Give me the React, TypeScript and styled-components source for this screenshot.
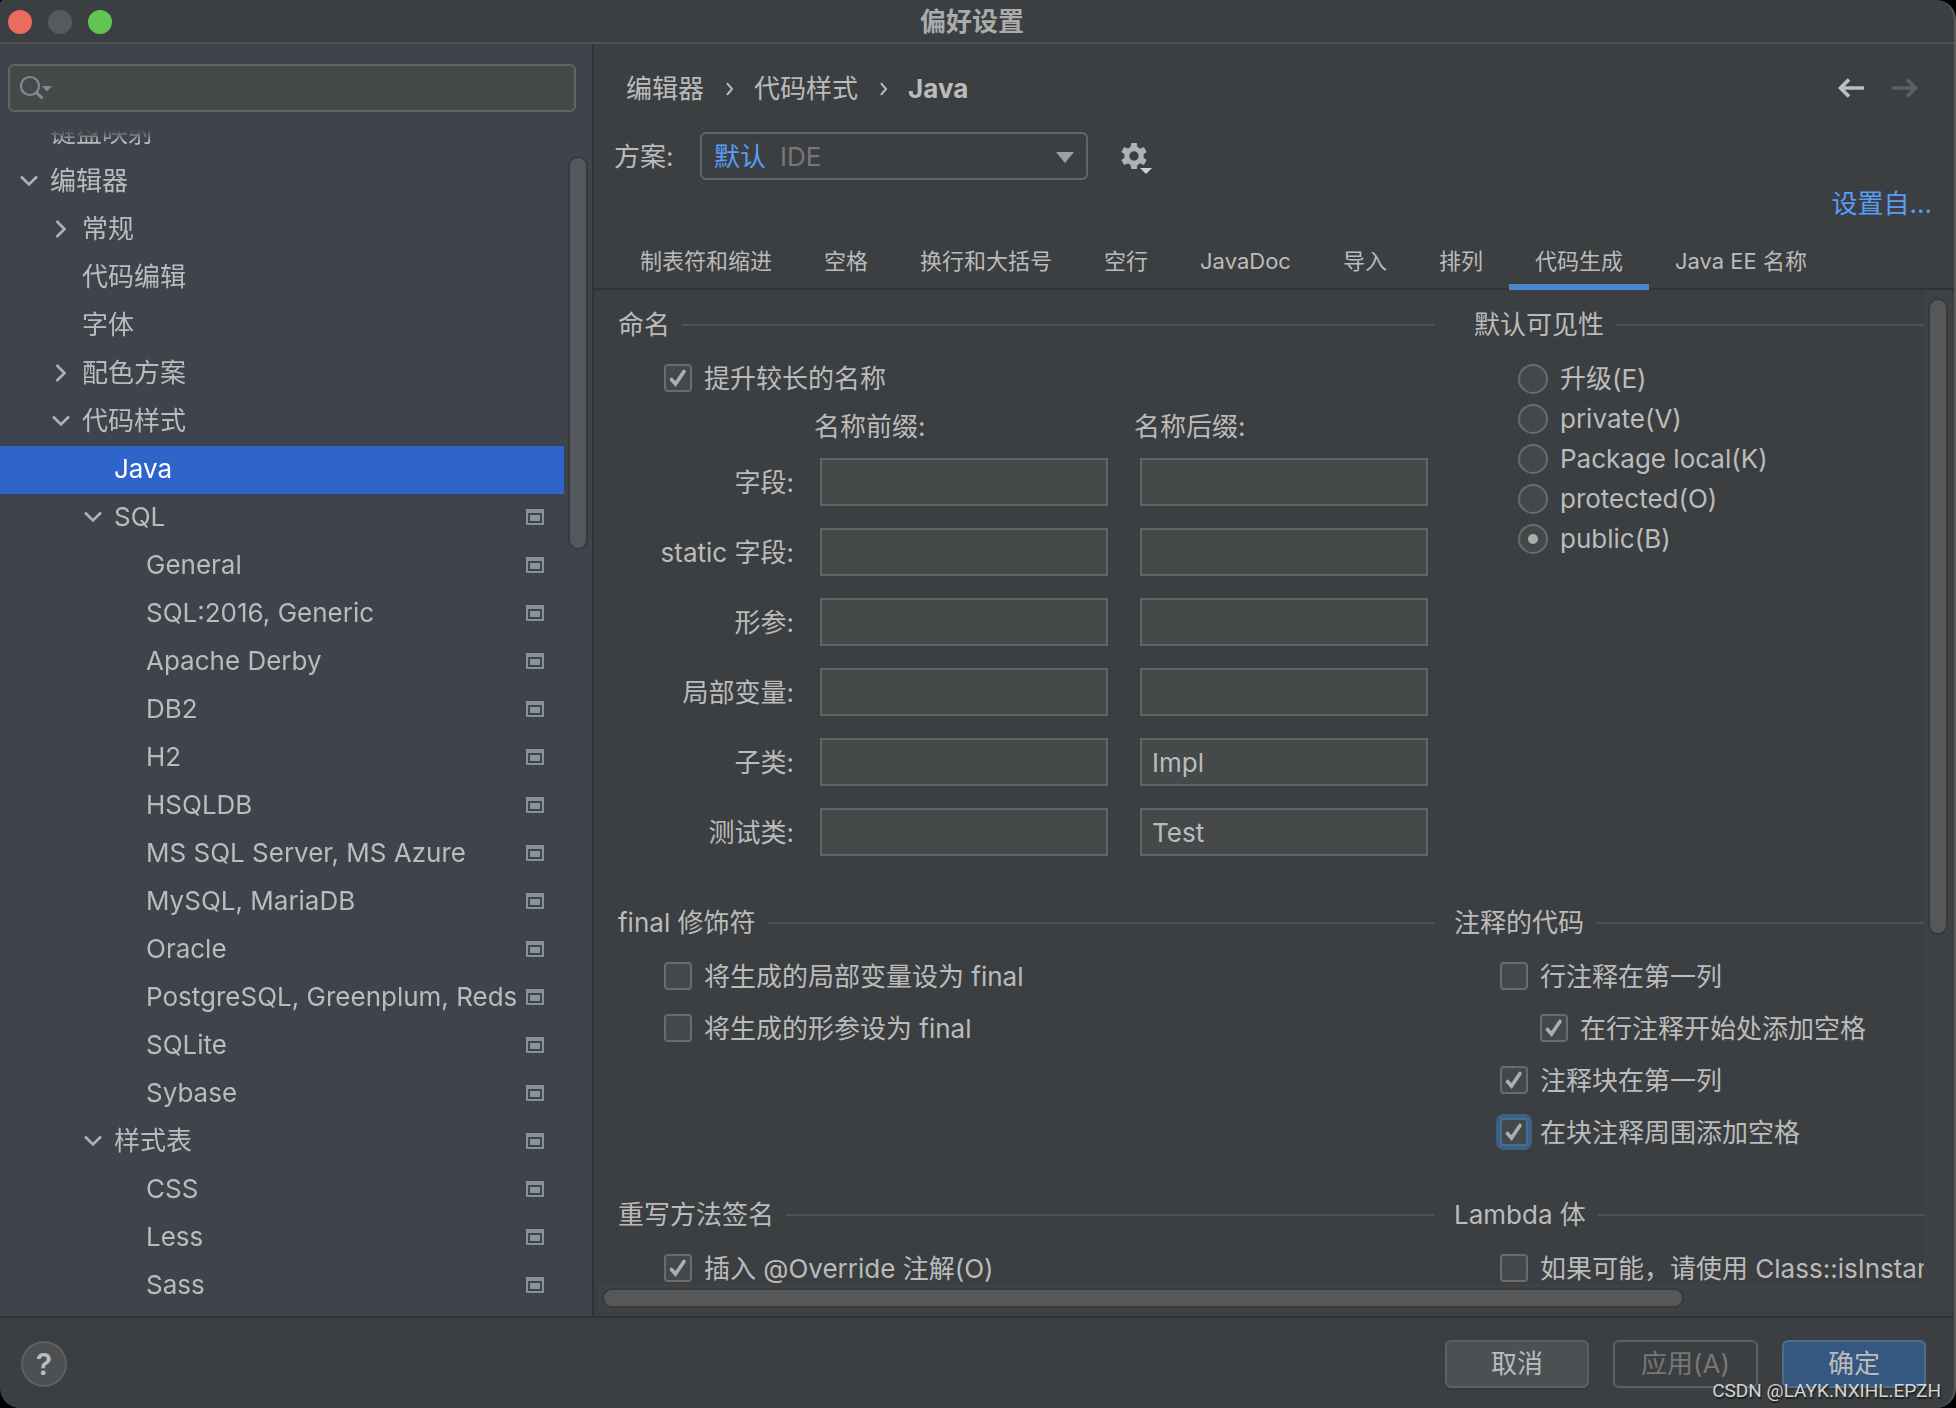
import React from "react";
import styled, { createGlobalStyle, css } from "styled-components";

const color = {
  panel: "#3c3f41",
  sidebar: "#3f434c",
  field: "#45494a",
  border: "#646464",
  divider: "#323232",
  rule: "#515151",
  text: "#bbbbbb",
  dim: "#777777",
  link: "#589df6",
  accent: "#4a88c7",
  selected: "#2f65ca",
  badge: "#87939a",
  thumb: "#565759",
  track: "#3f4244",
};

const Global = createGlobalStyle`
  *, *::before, *::after { box-sizing: border-box; }
  body { margin: 0; background: #000; }
  body, button, input, select {
    font-family: Inter, "Noto Sans CJK SC", sans-serif;
    font-size: 26px;
    line-height: 32px;
    color: ${color.text};
  }
  button, input, select { margin: 0; padding: 0; }
  ul { list-style: none; margin: 0; padding: 0; }
`;

const Window = styled.div`
  position: relative;
  display: flex;
  flex-direction: column;
  height: 100vh;
  overflow: hidden;
  background: ${color.panel};
  border-right: 2px solid #5a5c5e;
  border-radius: 4px 20px 20px 20px;
`;

/* ---------- title bar ---------- */

const TitleBar = styled.header`
  flex: none;
  display: flex;
  align-items: center;
  height: 44px;
  padding: 2px 18px 0 8px;
  border-bottom: 2px solid ${color.rule};
`;

const Lights = styled.div`
  flex: 1;
  display: flex;
  gap: 16px;
`;

const Light = styled.button<{ $fill: string }>`
  width: 24px;
  height: 24px;
  border: 0;
  border-radius: 50%;
  background: ${(p) => p.$fill};
`;

const Title = styled.h1`
  margin: 0;
  font-size: 26px;
  line-height: 32px;
  font-weight: 700;
  color: #a9abac;
`;

const TitleSpacer = styled.div`
  flex: 1;
`;

/* ---------- sidebar ---------- */

const Body = styled.div`
  flex: 1;
  min-height: 0;
  display: flex;
`;

const Sidebar = styled.nav`
  flex: none;
  display: flex;
  flex-direction: column;
  width: 594px;
  background: ${color.sidebar};
  border-right: 2px solid ${color.divider};
`;

const SearchBox = styled.label`
  flex: none;
  display: flex;
  align-items: center;
  height: 48px;
  margin: 20px 16px 18px 8px;
  padding: 0 10px;
  background: ${color.field};
  border: 2px solid ${color.border};
  border-radius: 6px;
`;

const SearchInput = styled.input`
  flex: 1;
  min-width: 0;
  border: 0;
  outline: 0;
  background: transparent;
`;

const TreeArea = styled.div`
  flex: 1;
  min-height: 0;
  display: flex;
  overflow: hidden;
`;

const Tree = styled.ul`
  flex: 1;
  min-width: 0;
  overflow: hidden;
  mask-image: linear-gradient(transparent, #000 12px);
`;

const TreeRow = styled.li<{ $depth: number; $selected?: boolean }>`
  display: flex;
  align-items: center;
  height: 48px;
  padding: 0 20px 2px ${(p) => 18 + p.$depth * 32}px;
  white-space: nowrap;
  ${(p) =>
    p.$selected &&
    css`
      background: ${color.selected};
      color: #ffffff;
    `}
  &:first-child {
    margin-top: -20px;
  }
`;

const Twisty = styled.span`
  flex: none;
  display: flex;
  width: 32px;
`;

const RowText = styled.span`
  flex: 1;
  min-width: 0;
  overflow: hidden;
`;

const SideScroll = styled.div`
  flex: none;
  width: 28px;
  padding: 26px 4px 0;
`;

const Thumb = styled.div<{ $fill?: string }>`
  width: 20px;
  height: 100%;
  border: 2px solid #37393b;
  border-radius: 10px;
  background: ${(p) => p.$fill ?? color.thumb};
`;

const SideThumb = styled(Thumb)`
  height: 34%;
`;

/* ---------- main pane ---------- */

const Main = styled.main`
  flex: 1;
  min-width: 0;
  display: flex;
  flex-direction: column;
`;

const TopRow = styled.div`
  display: flex;
  justify-content: space-between;
  align-items: center;
  height: 88px;
  padding: 0 36px 0 32px;
`;

const Crumbs = styled.ol`
  display: flex;
  align-items: center;
  gap: 20px;
  margin: 0;
  padding: 2px 0 0;
  list-style: none;
`;

const Crumb = styled.li<{ $current?: boolean }>`
  display: flex;
  align-items: center;
  gap: 22px;
  font-weight: ${(p) => (p.$current ? 700 : 400)};
`;

const History = styled.div`
  display: flex;
  gap: 26px;
`;

const IconButton = styled.button`
  display: flex;
  border: 0;
  background: transparent;
`;

const SchemeRow = styled.div`
  display: flex;
  align-items: center;
  height: 48px;
  padding-left: 20px;
`;

const SchemeLabel = styled.label`
  width: 86px;
  padding-top: 2px;
`;

const SelectBox = styled.div`
  position: relative;
  width: 388px;
  margin-right: 32px;
`;

const SchemeSelect = styled.select`
  display: block;
  appearance: none;
  width: 100%;
  height: 48px;
  padding: 2px 12px 0;
  background: ${color.panel};
  border: 2px solid ${color.border};
  border-radius: 6px;
  color: ${color.link};
`;

const SelectHint = styled.span`
  position: absolute;
  top: 9px;
  left: 80px;
  color: ${color.dim};
  pointer-events: none;
`;

const SelectArrow = styled.svg`
  position: absolute;
  top: 20px;
  right: 14px;
  pointer-events: none;
`;

const LinkRow = styled.div`
  display: flex;
  justify-content: flex-end;
  height: 54px;
  padding: 8px 22px 0;
`;

const Link = styled.a`
  color: ${color.link};
  text-decoration: none;
`;

const Tabs = styled.div`
  flex: none;
  display: flex;
  height: 56px;
  padding-left: 20px;
  border-bottom: 2px solid ${color.divider};
`;

const Tab = styled.button<{ $active?: boolean }>`
  height: 56px;
  padding: 4px 26px 0;
  border: 0;
  border-bottom: 6px solid ${(p) => (p.$active ? color.accent : "transparent")};
  background: transparent;
  font-size: 22px;
  white-space: nowrap;
`;

const Pane = styled.div`
  flex: 1;
  min-height: 0;
  display: grid;
  grid-template-columns: minmax(0, 1fr) 28px;
  grid-template-rows: minmax(0, 1fr) 28px;
  padding: 0 2px 4px 4px;
`;

const Viewport = styled.div`
  overflow: hidden;
  padding: 19px 0 0 20px;
`;

const VTrack = styled.div`
  padding: 8px 4px 0;
  background: ${color.track};
`;

const VThumb = styled(Thumb)`
  height: calc(65% + 16px);
  max-height: 637px;
`;

const HTrack = styled.div`
  grid-column: 1 / -1;
  padding: 4px 4px 0;
  background: ${color.track};
`;

const HThumb = styled(Thumb)`
  width: calc(80% + 5px);
  height: 20px;
`;

const SectionRow = styled.div<{ $gap: number; $after: number }>`
  display: flex;
  gap: ${(p) => p.$gap}px;
  padding-bottom: ${(p) => p.$after}px;
`;

const LeftSection = styled.section`
  flex: 1;
  min-width: 0;
`;

const RightSection = styled.section<{ $width: number }>`
  flex: none;
  width: ${(p) => p.$width}px;
  overflow: hidden;
`;

const SectionTitle = styled.h2`
  display: flex;
  align-items: center;
  gap: 12px;
  margin: 0 0 11px;
  font-size: 26px;
  line-height: 32px;
  font-weight: 400;
  white-space: nowrap;
  &::after {
    content: "";
    flex: 1;
    height: 2px;
    background: ${color.rule};
  }
`;

const CheckRow = styled.label<{ $nested?: boolean }>`
  display: flex;
  align-items: center;
  gap: 12px;
  height: 52px;
  padding-left: ${(p) => (p.$nested ? 86 : 46)}px;
  white-space: nowrap;
`;

const CheckFace = styled.span`
  flex: none;
  display: grid;
  width: 28px;
  height: 28px;
  & > * {
    grid-area: 1 / 1;
  }
  & > svg {
    z-index: 1;
    pointer-events: none;
  }
`;

const CheckText = styled.span`
  padding-top: 2px;
`;

const CheckInput = styled.input<{ $focused?: boolean }>`
  appearance: none;
  width: 28px;
  height: 28px;
  background: #43494a;
  border: 2px solid #6b6b6b;
  border-radius: 4px;
  ${(p) =>
    p.$focused &&
    css`
      border-color: #466d94;
      box-shadow: 0 0 0 4px #3d6185;
    `}
`;

const RadioList = styled.div`
  padding: 7px 0 0 44px;
`;

const RadioRow = styled.label`
  display: flex;
  align-items: center;
  gap: 12px;
  height: 40px;
`;

const RadioInput = styled.input`
  appearance: none;
  display: grid;
  place-items: center;
  width: 30px;
  height: 30px;
  background: #43494a;
  border: 2px solid #6b6b6b;
  border-radius: 50%;
  &:checked::before {
    content: "";
    width: 10px;
    height: 10px;
    border-radius: 50%;
    background: #adadad;
  }
`;

const NameGrid = styled.div`
  display: grid;
  grid-template-columns: 1fr 300px 300px;
  column-gap: 20px;
  row-gap: 10px;
`;

const NameHead = styled.div`
  height: 38px;
  padding-top: 7px;
`;

const NameLabel = styled.label`
  justify-self: end;
  align-self: center;
  padding-top: 2px;
  white-space: nowrap;
`;

const NameInput = styled.input`
  min-width: 0;
  height: 48px;
  margin: 6px;
  padding: 0 10px;
  background: ${color.field};
  border: 2px solid ${color.border};
`;

/* ---------- footer ---------- */

const Footer = styled.footer`
  flex: none;
  display: flex;
  align-items: center;
  gap: 24px;
  height: 92px;
  padding: 2px 28px 0 21px;
  border-top: 2px solid ${color.divider};
`;

const Help = styled.button`
  width: 46px;
  height: 46px;
  margin-right: auto;
  border: 2px solid #5e6060;
  border-radius: 50%;
  background: #4c5052;
  font-size: 30px;
  font-weight: 600;
`;

const Button = styled.button<{ $kind?: "primary" }>`
  min-width: 144px;
  height: 48px;
  padding: 0 26px;
  border: 2px solid #5e6060;
  border-radius: 6px;
  background: #4c5052;
  box-shadow: 0 2px 0 #36393a;
  &:disabled {
    background: transparent;
    color: ${color.dim};
    box-shadow: none;
  }
  ${(p) =>
    p.$kind === "primary" &&
    css`
      background: #365880;
      border-color: #4c708c;
    `}
`;

const Watermark = styled.div`
  position: absolute;
  right: 13px;
  bottom: 5px;
  font-family: Roboto, sans-serif;
  font-size: 19px;
  line-height: 24px;
  color: #d4d4d4;
  text-shadow: 1px 2px 1px #1c1c1c;
`;

/* ---------- icons ---------- */

const ChevronDown = () => (
  <svg width="22" height="22" viewBox="0 0 22 22" fill="none" stroke="#afb1b3" strokeWidth="2.6">
    <path d="M3 6.5L11 14.5L19 6.5" />
  </svg>
);

const ChevronRight = () => (
  <svg width="26" height="22" viewBox="0 0 26 22" fill="none" stroke="#afb1b3" strokeWidth="2.6">
    <path d="M6.5 3L14.5 11L6.5 19" />
  </svg>
);

const SearchIcon = () => (
  <svg width="34" height="32" viewBox="0 0 34 32" fill="none">
    <circle cx="10" cy="14" r="9" stroke="#7f8b91" strokeWidth="2.2" />
    <path d="M16.5 20.5L22.5 26.5" stroke="#7f8b91" strokeWidth="3" />
    <path d="M22 14h10l-5 5.500z" fill="#7f8b91" />
  </svg>
);

const ProjectBadge = () => (
  <svg width="18" height="16" viewBox="0 0 18 16" fill={color.badge}>
    <path fillRule="evenodd" d="M0 0h18v16H0zM2 4v10h14V4z" />
    <path d="M4 6h10v6H4z" />
  </svg>
);

const Gear = () => (
  <svg width="34" height="36" viewBox="0 0 34 36">
    <g transform="translate(14 18)" fill="#afb1b3">
      <circle r="7.2" fill="none" stroke="#afb1b3" strokeWidth="5" />
      {[0, 60, 120, 180, 240, 300].map((a) => (
        <path key={a} d="M-3.500 -8L-2.800 -13H2.800L3.500 -8z" transform={`rotate(${a})`} />
      ))}
    </g>
    <path d="M20 30h12l-6 6z" fill="#d0d0d0" />
  </svg>
);

const Arrow = ({ back }: { back?: boolean }) => (
  <svg
    width="28"
    height="22"
    viewBox="0 0 28 22"
    fill="none"
    stroke={back ? "#bdbfc1" : "#5c5e60"}
    strokeWidth="3.6"
  >
    <path d={back ? "M13 2.500L4.500 11L13 19.500M5 11H28" : "M17 2.500L25.500 11L17 19.500M25 11H2"} />
  </svg>
);

const CrumbArrow = () => (
  <svg width="8" height="14" viewBox="0 0 8 14" fill="none" stroke={color.text} strokeWidth="2">
    <path d="M1 1C3 4 5 5.500 6 7C5 8.500 3 10 1 13" />
  </svg>
);

/* ---------- data ---------- */

type Node = { text: string; depth: number; open?: boolean; badge?: boolean; selected?: boolean };

const nodes: Node[] = [
  { text: "键盘映射", depth: 0 },
  { text: "编辑器", depth: 0, open: true },
  { text: "常规", depth: 1, open: false },
  { text: "代码编辑", depth: 1 },
  { text: "字体", depth: 1 },
  { text: "配色方案", depth: 1, open: false },
  { text: "代码样式", depth: 1, open: true },
  { text: "Java", depth: 2, selected: true },
  { text: "SQL", depth: 2, open: true, badge: true },
  ...[
    "General",
    "SQL:2016, Generic",
    "Apache Derby",
    "DB2",
    "H2",
    "HSQLDB",
    "MS SQL Server, MS Azure",
    "MySQL, MariaDB",
    "Oracle",
    "PostgreSQL, Greenplum, Reds",
    "SQLite",
    "Sybase",
  ].map((text) => ({ text, depth: 3, badge: true })),
  { text: "样式表", depth: 2, open: true, badge: true },
  ...["CSS", "Less", "Sass"].map((text) => ({ text, depth: 3, badge: true })),
];

const tabs = [
  "制表符和缩进",
  "空格",
  "换行和大括号",
  "空行",
  "JavaDoc",
  "导入",
  "排列",
  "代码生成",
  "Java EE 名称",
];

const names = [
  { id: "field", label: "字段:", suffix: "" },
  { id: "static", label: "static 字段:", suffix: "" },
  { id: "param", label: "形参:", suffix: "" },
  { id: "local", label: "局部变量:", suffix: "" },
  { id: "subclass", label: "子类:", suffix: "Impl" },
  { id: "test", label: "测试类:", suffix: "Test" },
];

const visibilities = ["升级(E)", "private(V)", "Package local(K)", "protected(O)", "public(B)"];

type CheckProps = { label: string; on?: boolean; nested?: boolean; focused?: boolean };

function Check({ label, on = false, nested, focused }: CheckProps) {
  const [checked, setChecked] = React.useState(on);
  return (
    <CheckRow $nested={nested}>
      <CheckFace>
        <CheckInput
          type="checkbox"
          checked={checked}
          onChange={(e) => setChecked(e.target.checked)}
          $focused={focused}
        />
        {checked && (
          <svg width="28" height="28" viewBox="0 0 28 28" fill="none">
            <path d="M7.500 15.500L11.500 20L20 7.500" stroke="#adadad" strokeWidth="3.600" strokeLinecap="round" />
          </svg>
        )}
      </CheckFace>
      <CheckText>{label}</CheckText>
    </CheckRow>
  );
}

export default function App() {
  return (
    <Window>
      <Global />
      <TitleBar>
        <Lights>
          <Light $fill="#ed6a5e" aria-label="关闭" />
          <Light $fill="#565a5c" aria-label="最小化" />
          <Light $fill="#61c554" aria-label="缩放" />
        </Lights>
        <Title>偏好设置</Title>
        <TitleSpacer />
      </TitleBar>

      <Body>
        <Sidebar>
          <SearchBox>
            <SearchIcon />
            <SearchInput type="text" aria-label="搜索" />
          </SearchBox>
          <TreeArea>
            <Tree role="tree">
              {nodes.map((n) => (
                <TreeRow
                  key={n.text}
                  role="treeitem"
                  aria-level={n.depth + 1}
                  aria-expanded={n.open}
                  aria-selected={!!n.selected}
                  $depth={n.depth}
                  $selected={n.selected}
                >
                  <Twisty>
                    {n.open === true && <ChevronDown />}
                    {n.open === false && <ChevronRight />}
                  </Twisty>
                  <RowText>{n.text}</RowText>
                  {n.badge && <ProjectBadge />}
                </TreeRow>
              ))}
            </Tree>
            <SideScroll>
              <SideThumb $fill="#54575d" />
            </SideScroll>
          </TreeArea>
        </Sidebar>

        <Main>
          <TopRow>
            <Crumbs>
              <Crumb>
                编辑器
                <CrumbArrow />
              </Crumb>
              <Crumb>
                代码样式
                <CrumbArrow />
              </Crumb>
              <Crumb $current>Java</Crumb>
            </Crumbs>
            <History>
              <IconButton aria-label="后退">
                <Arrow back />
              </IconButton>
              <IconButton aria-label="前进" disabled>
                <Arrow />
              </IconButton>
            </History>
          </TopRow>

          <SchemeRow>
            <SchemeLabel htmlFor="scheme">方案:</SchemeLabel>
            <SelectBox>
              <SchemeSelect id="scheme">
                <option>默认</option>
              </SchemeSelect>
              <SelectHint>IDE</SelectHint>
              <SelectArrow width="18" height="11" viewBox="0 0 18 11">
                <path d="M0 0h18l-9 11z" fill="#9da0a2" />
              </SelectArrow>
            </SelectBox>
            <IconButton aria-label="方案操作">
              <Gear />
            </IconButton>
          </SchemeRow>

          <LinkRow>
            <Link href="#from">设置自...</Link>
          </LinkRow>

          <Tabs role="tablist">
            {tabs.map((t) => (
              <Tab key={t} role="tab" aria-selected={t === "代码生成"} $active={t === "代码生成"}>
                {t}
              </Tab>
            ))}
          </Tabs>

          <Pane>
            <Viewport>
              <SectionRow $gap={40} $after={45}>
                <LeftSection>
                  <SectionTitle>命名</SectionTitle>
                  <Check label="提升较长的名称" on />
                  <NameGrid>
                    <span />
                    <NameHead>名称前缀:</NameHead>
                    <NameHead>名称后缀:</NameHead>
                    {names.map((n) => (
                      <React.Fragment key={n.id}>
                        <NameLabel htmlFor={n.id}>{n.label}</NameLabel>
                        <NameInput id={n.id} type="text" />
                        <NameInput type="text" aria-label={n.label} defaultValue={n.suffix} />
                      </React.Fragment>
                    ))}
                  </NameGrid>
                </LeftSection>
                <RightSection $width={450}>
                  <SectionTitle>默认可见性</SectionTitle>
                  <RadioList>
                    {visibilities.map((v) => (
                      <RadioRow key={v}>
                        <RadioInput type="radio" name="visibility" defaultChecked={v === "public(B)"} />
                        {v}
                      </RadioRow>
                    ))}
                  </RadioList>
                </RightSection>
              </SectionRow>

              <SectionRow $gap={20} $after={41}>
                <LeftSection>
                  <SectionTitle>final 修饰符</SectionTitle>
                  <Check label="将生成的局部变量设为 final" />
                  <Check label="将生成的形参设为 final" />
                </LeftSection>
                <RightSection $width={470}>
                  <SectionTitle>注释的代码</SectionTitle>
                  <Check label="行注释在第一列" />
                  <Check label="在行注释开始处添加空格" on nested />
                  <Check label="注释块在第一列" on />
                  <Check label="在块注释周围添加空格" on focused />
                </RightSection>
              </SectionRow>

              <SectionRow $gap={20} $after={0}>
                <LeftSection>
                  <SectionTitle>重写方法签名</SectionTitle>
                  <Check label="插入 @Override 注解(O)" on />
                </LeftSection>
                <RightSection $width={470}>
                  <SectionTitle>Lambda 体</SectionTitle>
                  <Check label="如果可能，请使用 Class::isInstance" />
                </RightSection>
              </SectionRow>
            </Viewport>
            <VTrack>
              <VThumb />
            </VTrack>
            <HTrack>
              <HThumb />
            </HTrack>
          </Pane>
        </Main>
      </Body>

      <Footer>
        <Help aria-label="帮助">?</Help>
        <Button>取消</Button>
        <Button disabled>应用(A)</Button>
        <Button $kind="primary">确定</Button>
      </Footer>
      <Watermark>CSDN @LAYK.NXIHL.EPZH</Watermark>
    </Window>
  );
}
